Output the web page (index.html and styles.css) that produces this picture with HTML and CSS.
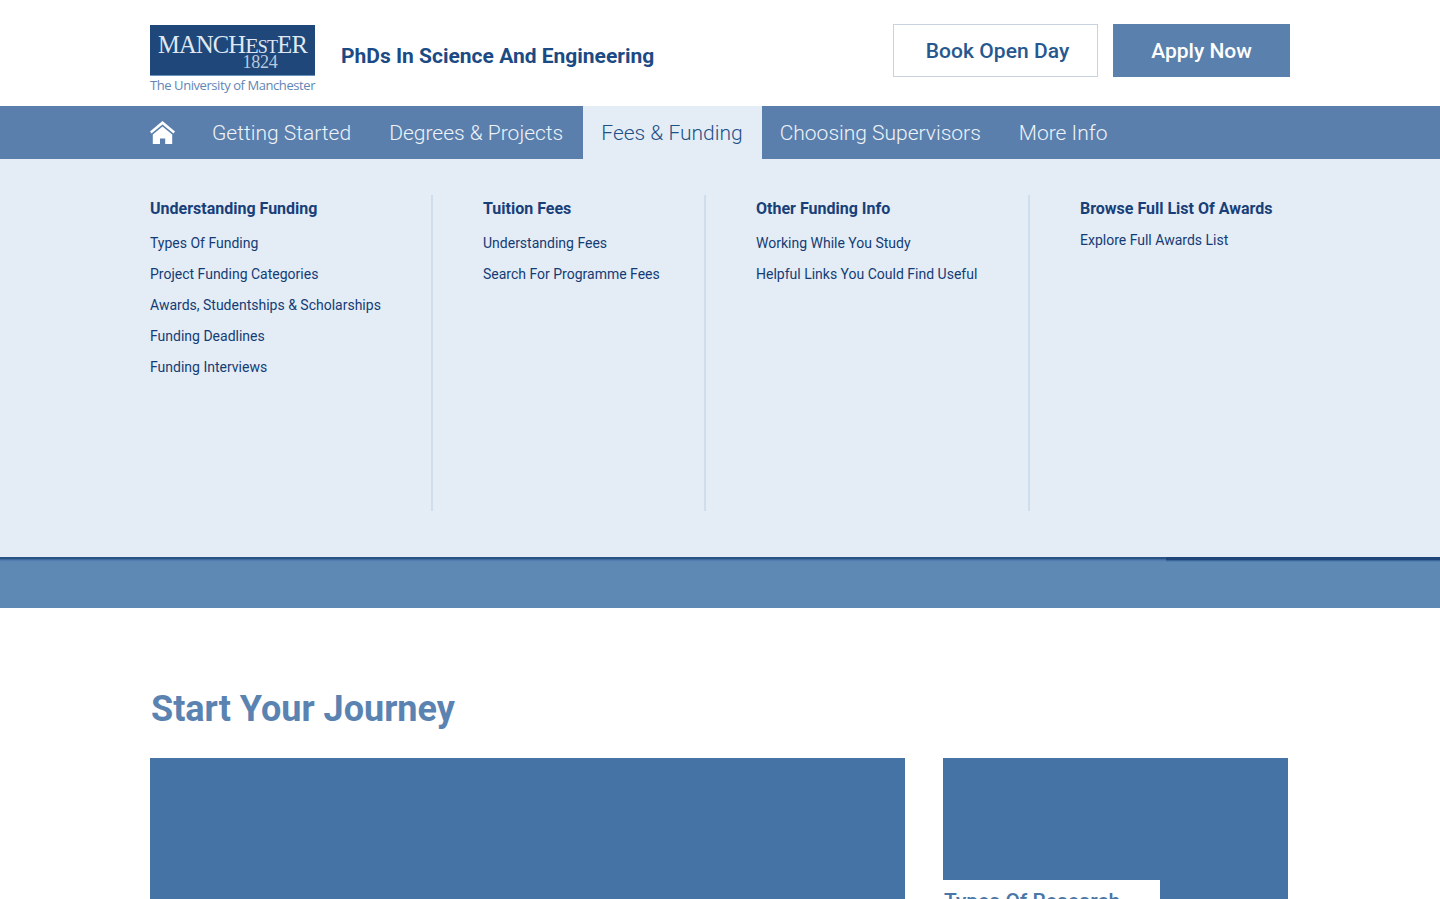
FILE: index.html
```html
<!DOCTYPE html>
<html lang="en">
<head>
<meta charset="utf-8">
<title>PhDs In Science And Engineering</title>
<link rel="stylesheet" href="styles.css">
</head>
<body>
<header class="site-header">
  <div class="wrap header-inner">
    <a class="logo" href="#">
      <span class="logo-box">
        <span class="logo-word">MANCH<span class="logo-e">E</span><span class="logo-st">ST</span><span class="logo-er">ER</span></span>
        <span class="logo-year">1824</span>
      </span>
      <span class="logo-sub">The University of Manchester</span>
    </a>
    <div class="site-title">PhDs In Science And Engineering</div>
    <div class="cta-group">
      <a class="btn btn-outline" href="#">Book Open Day</a>
      <a class="btn btn-solid" href="#">Apply Now</a>
    </div>
  </div>
</header>
<nav class="main-nav">
  <div class="wrap nav-inner">
    <a class="nav-home" href="#" aria-label="Home">
      <svg viewBox="0 0 25 23" width="25" height="23"><path fill="#fff" d="M12.5 0 L0 10.6 L1.5 12.6 L12.5 3.4 L23.5 12.6 L25 10.6 Z"/><path fill="#fff" d="M12.5 5.6 L2.8 13.6 V23 H10 V17.6 H15.2 V23 H22.2 V13.6 Z"/></svg>
    </a>
    <a class="nav-item nav-first" href="#">Getting Started</a>
    <a class="nav-item nav-second" href="#">Degrees &amp; Projects</a>
    <a class="nav-item nav-active" href="#">Fees &amp; Funding</a>
    <a class="nav-item nav-fourth" href="#">Choosing Supervisors</a>
    <a class="nav-item nav-fifth" href="#">More Info</a>
  </div>
</nav>
<section class="mega">
  <div class="wrap mega-grid">
    <div class="mega-col col-a">
      <h3>Understanding Funding</h3>
      <ul>
        <li><a href="#">Types Of Funding</a></li>
        <li><a href="#">Project Funding Categories</a></li>
        <li><a href="#">Awards, Studentships &amp; Scholarships</a></li>
        <li><a href="#">Funding Deadlines</a></li>
        <li><a href="#">Funding Interviews</a></li>
      </ul>
    </div>
    <div class="mega-col col-b">
      <h3>Tuition Fees</h3>
      <ul>
        <li><a href="#">Understanding Fees</a></li>
        <li><a href="#">Search For Programme Fees</a></li>
      </ul>
    </div>
    <div class="mega-col col-c">
      <h3>Other Funding Info</h3>
      <ul>
        <li><a href="#">Working While You Study</a></li>
        <li><a href="#">Helpful Links You Could Find Useful</a></li>
      </ul>
    </div>
    <div class="mega-col col-d">
      <h3>Browse Full List Of Awards</h3>
      <ul class="list-tight">
        <li><a href="#">Explore Full Awards List</a></li>
      </ul>
    </div>
  </div>
</section>
<div class="hero-band"><div class="band-dark"></div></div>
<main class="wrap journey">
  <h2>Start Your Journey</h2>
  <div class="cards">
    <div class="card card-large"></div>
    <div class="card card-small"><div class="card-label">Types Of Research</div></div>
  </div>
</main>
</body>
</html>
```
FILE: styles.css
```css
* { box-sizing: border-box; }
html, body { margin: 0; padding: 0; height: 899px; overflow: hidden; background: #fff; }
body { font-family: Roboto, "Liberation Sans", sans-serif; color: #1c4580; }
a { text-decoration: none; color: inherit; }
.wrap { width: 1140px; margin-left: 150px; }

.site-header { height: 106px; }
.header-inner { display: flex; align-items: flex-start; height: 106px; }
.logo { display: flex; flex-direction: column; width: 165px; margin-top: 25px; }
.logo-box { display: flex; flex-direction: column; align-items: center; height: 51px; background: #1f4779; border-bottom: 1px solid #6f93c0; color: #dfe8f3; font-family: "Liberation Serif", serif; }
.logo-word { font-size: 24.5px; line-height: 20px; margin-top: 10px; letter-spacing: -.8px; white-space: nowrap; }
.logo-e { font-size: 22px; }
.logo-st { font-size: 18px; }
.logo-er { font-size: 24.5px; }
.logo-year { font-size: 18px; line-height: 13px; margin-top: -1px; margin-left: 55px; letter-spacing: -.2px; color: #b9c9df; }
.logo-sub { font-family: "Open Sans", "Liberation Sans", sans-serif; font-size: 13px; line-height: 19px; letter-spacing: -.43px; color: #5f86b6; white-space: nowrap; }
.site-title { margin: 43px 0 0 26px; font-size: 21px; line-height: 26px; font-weight: 700; color: #1c4a84; white-space: nowrap; }
.cta-group { margin: 24px 0 0 auto; display: flex; gap: 15px; }
.btn { display: flex; align-items: center; justify-content: center; height: 53px; font-size: 21px; font-weight: 500; }
.btn-outline { width: 205px; border: 1px solid #c9d3df; padding-left: 4px; letter-spacing: .05px; color: #26588f; }
.btn-solid { width: 177px; background: #5a80ad; color: #fff; }

.main-nav { height: 53px; background: #5a7fac; }
.nav-inner { display: flex; height: 53px; align-items: stretch; }
.nav-home { display: flex; align-items: center; width: 25px; }
.nav-item { display: flex; align-items: center; font-size: 21px; font-weight: 300; color: #eef3f9; white-space: nowrap; }
.nav-first { margin-left: 37px; }
.nav-second { margin-left: 38px; }
.nav-active { margin-left: 20px; padding: 0 19px 0 18px; background: #e4edf6; color: #1f5189; }
.nav-fourth { margin-left: 18px; }
.nav-fifth { margin-left: 38px; }

.mega { height: 398px; background: #e4ecf6; padding-top: 36px; }
.mega-grid { display: flex; height: 316px; }
.mega-col { height: 316px; border-right: 2px solid #cfdeec; }
.col-a { width: 283px; }
.col-b { width: 273px; padding-left: 50px; }
.col-c { width: 324px; padding-left: 50px; }
.col-d { width: 260px; padding-left: 50px; border-right: 0; }
.mega-col h3 { margin: 3px 0 0; font-size: 16px; line-height: 21px; font-weight: 700; color: #183f78; white-space: nowrap; }
.mega-col ul { list-style: none; margin: 15px 0 0; padding: 0; display: flex; flex-direction: column; gap: 12px; }
.mega-col li { font-size: 14px; line-height: 19px; color: #133c74; white-space: nowrap; }
.mega-col .list-tight { margin-top: 12px; }

.hero-band { position: relative; height: 51px; background: linear-gradient(#2a5286 0 2px, #3f6b9d 2px 3px, #527db0 3px 4px, #5b86b3 4px 5px, #5f89b5 5px); }
.band-dark { position: absolute; top: 0; left: 1166px; right: 0; height: 5px; background: linear-gradient(#1f4579 0 3px, #3a6598 3px 4px, #5180af 4px); }

.journey { position: relative; }
.journey h2 { margin: 79px 0 0 1px; font-size: 36px; line-height: 44px; font-weight: 700; color: #5a83b2; }
.cards { display: flex; gap: 38px; margin-top: 27px; }
.card { height: 300px; background: #4673a6; }
.card-large { width: 755px; }
.card-small { position: relative; width: 345px; }
.card-label { position: absolute; left: 0; top: 122px; width: 217px; height: 60px; background: #fff; padding: 4px 0 0 1px; font-size: 21px; line-height: 34px; font-weight: 500; color: #4a76a8; white-space: nowrap; }
```
